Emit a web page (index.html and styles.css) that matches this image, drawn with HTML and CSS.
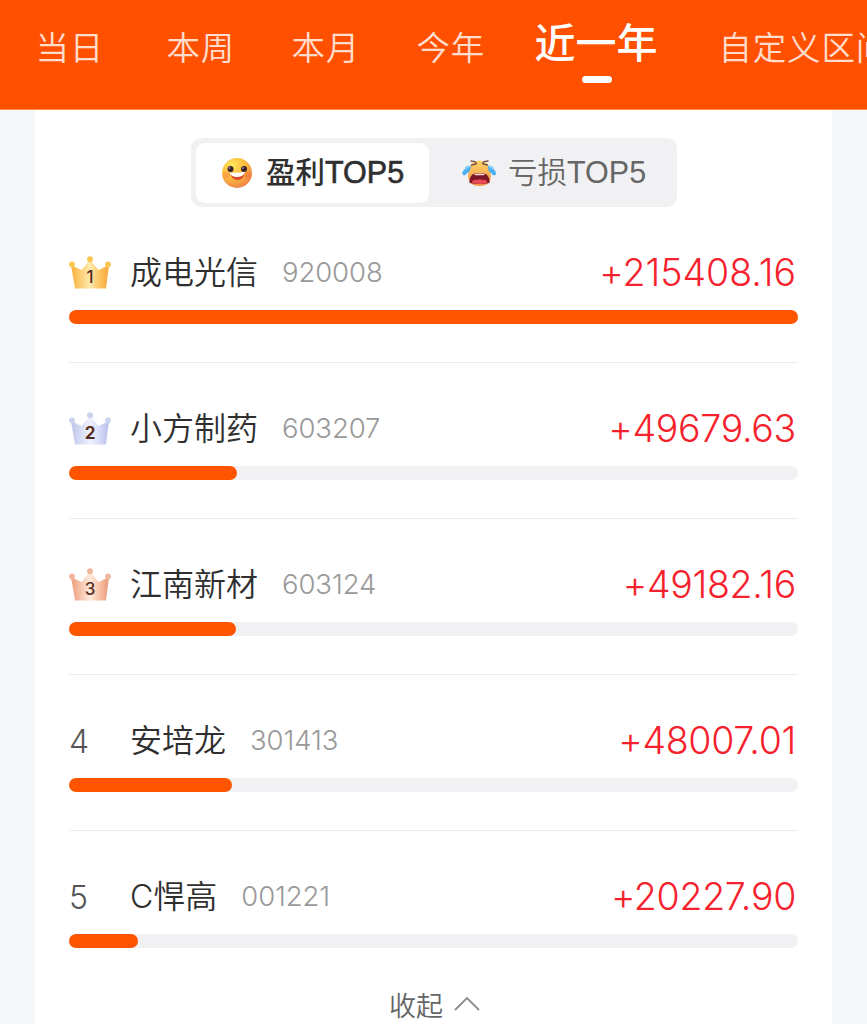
FILE: index.html
```html
<!DOCTYPE html>
<html lang="zh-CN">
<head>
    <meta charset="UTF-8">
    <meta name="viewport" content="width=device-width, initial-scale=1.0">
    <title>盈亏排行</title>
    <link rel="stylesheet" href="styles.css">
</head>
<body>
    <nav class="tabs">
        <a class="tab tab-day">当日</a>
        <a class="tab tab-week">本周</a>
        <a class="tab tab-month">本月</a>
        <a class="tab tab-ytd">今年</a>
        <a class="tab active">近一年</a>
        <a class="tab tab-custom">自定义区间</a>
    </nav>

    <svg class="defs" width="0" height="0">
        <defs>
            <linearGradient id="gold">
                <stop offset="0" stop-color="#f9b03a"/>
                <stop offset="0.5" stop-color="#ffeaae"/>
                <stop offset="0.75" stop-color="#fdc460"/>
                <stop offset="1" stop-color="#f5a53c"/>
            </linearGradient>
            <linearGradient id="silver">
                <stop offset="0" stop-color="#bdc4ea"/>
                <stop offset="0.5" stop-color="#eff1ff"/>
                <stop offset="0.75" stop-color="#d6dbf8"/>
                <stop offset="1" stop-color="#b9bfea"/>
            </linearGradient>
            <linearGradient id="bronze">
                <stop offset="0" stop-color="#ec9c7a"/>
                <stop offset="0.5" stop-color="#ffeadd"/>
                <stop offset="0.75" stop-color="#f8c2a6"/>
                <stop offset="1" stop-color="#e8977a"/>
            </linearGradient>
            <radialGradient id="face" cx="0.35" cy="0.25" r="0.8">
                <stop offset="0" stop-color="#ffe55c"/>
                <stop offset="0.5" stop-color="#fdbd3d"/>
                <stop offset="1" stop-color="#ee8048"/>
            </radialGradient>
            <linearGradient id="cryFace" x1="0" y1="0" x2="0" y2="1">
                <stop offset="0" stop-color="#ffd565"/>
                <stop offset="1" stop-color="#f1914a"/>
            </linearGradient>
        </defs>
    </svg>

    <main class="card">
        <div class="switch">
            <div class="option selected">
                <svg class="emoji" width="34" height="34" viewBox="0 0 34 34">
                    <circle cx="17" cy="17" r="15" fill="url(#face)"/>
                    <circle cx="6.5" cy="19" r="3.5" fill="#ff8a4a" opacity="0.5"/>
                    <circle cx="28" cy="19" r="3.5" fill="#f0643c" opacity="0.4"/>
                    <circle cx="10.5" cy="13" r="3" fill="#34212b"/>
                    <circle cx="24" cy="13" r="3" fill="#34212b"/>
                    <circle cx="9.5" cy="12" r="0.9" fill="#a891a0"/>
                    <circle cx="23" cy="12" r="0.9" fill="#a891a0"/>
                    <path d="M10 16.5 Q17 17.5 24.5 16 Q24 24 17.5 24 Q11.5 24 10 16.5Z" fill="#d8492f"/>
                    <path d="M9.5 16.5 Q17 17 25 15.8 Q24 20.5 17.5 21 Q11 21 9.5 16.5Z" fill="#fff"/>
                </svg>
                <span>盈利<span class="top">TOP5</span></span>
            </div>
            <div class="option">
                <svg class="emoji" width="34" height="34" viewBox="0 0 34 34">
                    <path d="M10 7 Q17.5 2 25 7 Q29 12 29 21 Q28 30 17.5 30 Q7 30 6 21 Q6 12 10 7Z" fill="url(#cryFace)"/>
                    <path d="M9 5 L13 5.5 L14.5 7.5 M9.5 9 L14 8 M26 5 L22 5.500 L20.5 7.5 M25.5 9 L21 8" fill="none" stroke="#77534d" stroke-width="1.3" stroke-linecap="round"/>
                    <path d="M9 10 Q3 9 3 13 Q-1 16 1 19 Q4 20 5 17 Q8 17 9 10Z" fill="#4ab0f2"/>
                    <path d="M26 10 Q31 9 31.5 13 Q35 16 33.5 19 Q30 20 29.5 17 Q26 17 26 10Z" fill="#4ab0f2"/>
                    <path d="M8 10.5 Q5 10 4 13 M27 10.5 Q29.5 10 30.5 13" fill="none" stroke="#91d8ff" stroke-width="1.5"/>
                    <path d="M11 18 Q17.5 16.5 24 18 Q28 21 27.5 27 Q17.5 29 7.5 27 Q7 21 11 18Z" fill="#7d1726"/>
                    <path d="M12 18.2 Q17.5 17 23 18.2 L22 19.2 H13Z" fill="#f1d7ce"/>
                    <path d="M9.5 27 Q11 22.5 14.5 24 Q17.5 22.5 20.5 24 Q24.5 22.5 25.5 27 Q17.5 29 9.5 27Z" fill="#e54a55"/>
                </svg>
                <span>亏损<span class="top">TOP5</span></span>
            </div>
        </div>

        <ul class="list">
            <li class="row">
                <div class="head">
                    <div class="rank medal-rank">
                        <svg class="crown" width="42" height="34" viewBox="0 0 42 34">
                            <path d="M2 9 L12.5 14 L21 4 L29.5 14 L40 9 L37 32.5 H6Z" fill="url(#gold)"/>
                            <g fill="#f9c652"><circle cx="3" cy="8.5" r="2.9"/><circle cx="21" cy="3.3" r="3"/><circle cx="39" cy="8.5" r="2.9"/></g>
                            <text class="medal" x="21" y="27" text-anchor="middle">1</text>
                        </svg>
                    </div>
                    <span class="name">成电光信</span>
                    <span class="code">920008</span>
                    <span class="amount">+215408.16</span>
                </div>
                <div class="bar"><div class="fill" style="width: 100%"></div></div>
            </li>
            <li class="row">
                <div class="head">
                    <div class="rank medal-rank">
                        <svg class="crown" width="42" height="34" viewBox="0 0 42 34">
                            <path d="M2 9 L12.5 14 L21 4 L29.5 14 L40 9 L37 32.5 H6Z" fill="url(#silver)"/>
                            <g fill="#cbd2ee"><circle cx="3" cy="8.5" r="2.9"/><circle cx="21" cy="3.3" r="3"/><circle cx="39" cy="8.5" r="2.9"/></g>
                            <text class="medal bold" x="21" y="27" text-anchor="middle">2</text>
                        </svg>
                    </div>
                    <span class="name">小方制药</span>
                    <span class="code">603207</span>
                    <span class="amount narrow">+49679.63</span>
                </div>
                <div class="bar"><div class="fill" style="width: 23.1%"></div></div>
            </li>
            <li class="row">
                <div class="head">
                    <div class="rank medal-rank">
                        <svg class="crown" width="42" height="34" viewBox="0 0 42 34">
                            <path d="M2 9 L12.5 14 L21 4 L29.5 14 L40 9 L37 32.5 H6Z" fill="url(#bronze)"/>
                            <g fill="#f0b69d"><circle cx="3" cy="8.5" r="2.9"/><circle cx="21" cy="3.3" r="3"/><circle cx="39" cy="8.5" r="2.9"/></g>
                            <text class="medal" x="21" y="27" text-anchor="middle">3</text>
                        </svg>
                    </div>
                    <span class="name">江南新材</span>
                    <span class="code">603124</span>
                    <span class="amount narrow">+49182.16</span>
                </div>
                <div class="bar"><div class="fill" style="width: 22.9%"></div></div>
            </li>
            <li class="row">
                <div class="head">
                    <div class="rank">4</div>
                    <span class="name">安培龙</span>
                    <span class="code">301413</span>
                    <span class="amount narrow">+48007.01</span>
                </div>
                <div class="bar"><div class="fill" style="width: 22.4%"></div></div>
            </li>
            <li class="row">
                <div class="head">
                    <div class="rank">5</div>
                    <span class="name">C悍高</span>
                    <span class="code">001221</span>
                    <span class="amount narrow">+20227.90</span>
                </div>
                <div class="bar"><div class="fill" style="width: 9.5%"></div></div>
            </li>
        </ul>

        <div class="collapse">
            <span>收起</span>
            <svg width="26" height="16" viewBox="0 0 26 16">
                <path d="M1 14 L13 2 L25 14" fill="none" stroke="#8c8c8c" stroke-width="1.8"/>
            </svg>
        </div>
    </main>
</body>
</html>
```
FILE: styles.css
```css
* {
    box-sizing: border-box;
}

body {
    margin: 0;
    height: 1024px;
    overflow: hidden;
    background-color: #f6f7fa;
    font-family: Inter, "Noto Sans CJK SC", sans-serif;
    font-feature-settings: "calt" 0;
    color: #2f2f2f;
}

.defs {
    position: absolute;
}

.tabs {
    display: flex;
    height: 110px;
    padding-left: 35.5px;
    overflow: hidden;
    background-color: #ff5000;
    border-bottom: 1px solid #ff8a52;
}

.tab {
    flex: none;
    height: 96px;
    line-height: 96px;
    font-size: 33.5px;
    font-weight: 350;
    letter-spacing: 0.8px;
    color: #ffdccc;
    white-space: nowrap;
}

.tab-day {
    width: 131px;
}

.tab-week,
.tab-month {
    width: 125px;
}

.tab-ytd {
    width: 118px;
}

.tab.active {
    display: flex;
    flex-direction: column;
    width: 184px;
    height: 86px;
    line-height: 86px;
    font-size: 41px;
    font-weight: 500;
    letter-spacing: 0;
    color: #fff;
}

.tab.active::after {
    content: "";
    width: 30px;
    height: 7px;
    margin: -10px 0 0 47px;
    border-radius: 4px;
    background-color: #fff;
}

.card {
    width: 797px;
    height: 914px;
    margin: 0 35px;
    padding: 28px 34px 0;
    background-color: #fff;
}

.switch {
    display: flex;
    width: 486px;
    height: 69px;
    margin: 0 0 0 122px;
    padding: 5px;
    border-radius: 10px;
    background-color: #f1f1f4;
}

.option {
    display: flex;
    align-items: center;
    width: 233px;
    height: 60px;
    padding-left: 24px;
    border-radius: 9px;
    font-size: 29.5px;
    font-weight: 350;
    line-height: 58px;
    color: #666;
    white-space: nowrap;
}

.option > span {
    height: 60px;
}

.option + .option {
    padding-left: 33px;
}

.option.selected {
    background-color: #fff;
    font-weight: 500;
    color: #2f2f2f;
}

.top {
    font-family: "Liberation Sans", Arial, sans-serif;
    font-size: 30.5px;
    font-weight: 400;
}

.selected .top {
    -webkit-text-stroke: 0.6px #2f2f2f;
}

.emoji {
    flex: none;
    margin-right: 12px;
}

.list {
    margin: 0;
    padding: 0;
    list-style: none;
}

.row {
    height: 156px;
    padding-top: 44px;
    border-bottom: 1px solid #ececec;
}

.row:last-child {
    border-bottom: none;
}

.head {
    display: flex;
    align-items: center;
    height: 44px;
    margin-bottom: 15px;
    line-height: 44px;
    white-space: nowrap;
}

.rank {
    width: 61px;
    padding-top: 1px;
    font-size: 32px;
    font-weight: 300;
    color: #555;
}

.medal-rank {
    padding: 0 0 1px;
}

.crown {
    display: block;
}

.medal {
    font-size: 17px;
    font-weight: 500;
    fill: #572b20;
}

.medal.bold {
    font-weight: 700;
}

.name {
    font-size: 32px;
    font-weight: 350;
}

.code {
    height: 46px;
    margin-left: 24px;
    font-size: 27.5px;
    font-weight: 300;
    letter-spacing: -0.1px;
    color: #999;
}

.amount {
    margin-left: auto;
    padding-right: 2px;
    font-size: 37.5px;
    font-weight: 300;
    color: #f5222d;
}

.amount.narrow {
    letter-spacing: -0.3px;
}

.bar {
    height: 14px;
    border-radius: 7px;
    background-color: #f1f1f4;
}

.fill {
    height: 14px;
    border-radius: 7px;
    background-color: #ff5500;
}

.collapse {
    display: flex;
    align-items: center;
    height: 34px;
    padding-left: 320px;
    font-size: 27px;
    font-weight: 350;
    color: #666;
}

.collapse svg {
    margin-left: 11px;
}
```
